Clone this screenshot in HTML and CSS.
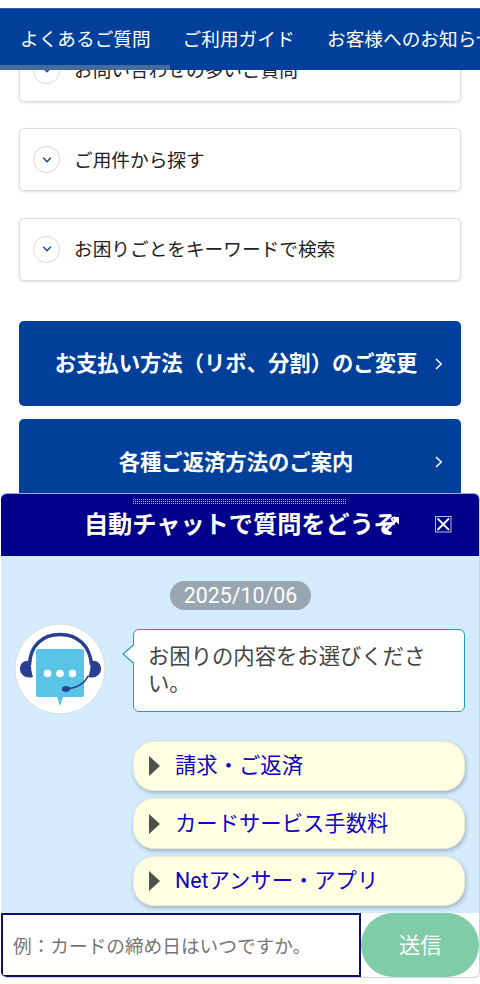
FILE: index.html
```
<!DOCTYPE html>
<html lang="ja">
<head>
<meta charset="utf-8">
<meta name="viewport" content="width=device-width">
<title>よくあるご質問</title>
<link rel="stylesheet" href="styles.css">
</head>
<body>
<nav class="nav">
  <a class="nav-item active">よくあるご質問</a>
  <a class="nav-item">ご利用ガイド</a>
  <a class="nav-item">お客様へのお知らせ</a>
</nav>
<main class="content">
  <div class="card"><span class="circle"><svg width="10" height="6" viewBox="0 0 10 6"><path d="M1.2 .8 5 4.8 8.8 .8"/></svg></span><span class="label">お問い合わせの多いご質問</span></div>
  <div class="card"><span class="circle"><svg width="10" height="6" viewBox="0 0 10 6"><path d="M1.2 .8 5 4.8 8.8 .8"/></svg></span><span class="label">ご用件から探す</span></div>
  <div class="card"><span class="circle"><svg width="10" height="6" viewBox="0 0 10 6"><path d="M1.2 .8 5 4.8 8.8 .8"/></svg></span><span class="label">お困りごとをキーワードで検索</span></div>
  <div class="links">
    <a class="link">お支払い方法（リボ、分割）のご変更<svg class="arrow" width="8" height="12" viewBox="0 0 8 12"><path d="M1 1 6.2 6 1 11"/></svg></a>
    <a class="link">各種ご返済方法のご案内<svg class="arrow" width="8" height="12" viewBox="0 0 8 12"><path d="M1 1 6.2 6 1 11"/></svg></a>
  </div>
</main>
<section class="chat">
  <header class="chat-head">
    <svg class="grip" width="214" height="5" viewBox="0 0 214 5"><path d="M0 .5H214M0 2.5H214M0 4.5H214"/></svg>
    <h2 class="title">自動チャットで質問をどうぞ</h2>
    <svg class="expand" width="18" height="18" viewBox="0 0 18 18"><path class="stroke" d="M4 14 14 4"/><path class="fill" d="M9.500 1H17V8.500zM1.500 9.500V17H9z"/></svg>
    <svg class="close" width="17" height="17" viewBox="0 0 17 17"><rect x=".5" y=".5" width="15.5" height="15.5"/><path d="M2.500 2.500 14 14M14 2.500 2.500 14"/></svg>
  </header>
  <div class="log">
    <div class="date">2025/10/06</div>
    <div class="row">
      <svg class="avatar" width="92" height="92" viewBox="0 0 92 92">
        <circle cx="46" cy="46" r="45" fill="#fff" stroke="#d9dde1"/>
        <path d="M22 26H68Q70 26 70 28V72Q70 74 68 74H49L46 83 43 74H24Q22 74 22 72V28Q22 26 24 26Z" fill="#59c4e7"/>
        <path d="M15.500 42C16 22 29 11.500 46 11.500S76 22 77.500 42" fill="none" stroke="#27408f" stroke-width="3.500"/>
        <path d="M19 54C12 56 6 52 6 46C6 40 10 37 16.500 38Q17 48 19 54ZM74 54C81 56 87 52 87 46C87 40 83 37 76.500 38Q77 48 74 54Z" fill="#27408f"/>
        <path d="M74 53C70 62 62 65 52 66" fill="none" stroke="#27408f" stroke-width="1.700"/>
        <rect x="48" y="63.300" width="8" height="5.400" rx="2.700" fill="#27408f"/>
        <circle cx="33.500" cy="50.500" r="3.800" fill="#fff"/><circle cx="46" cy="50.500" r="3.800" fill="#fff"/><circle cx="58.500" cy="50.500" r="3.800" fill="#fff"/>
      </svg>
      <div class="bubble">お困りの内容をお選びください。<svg class="tail" width="13" height="20" viewBox="0 0 13 20"><path d="M13 .7H11.700L1 10 11.700 19.300H13" fill="#fff" stroke="none"/><path d="M11.700 .7 1 10 11.700 19.300" fill="none" stroke="#2598bf" stroke-width="1.200"/></svg></div>
    </div>
    <div class="choices">
      <button class="choice"><svg width="11" height="20" viewBox="0 0 11 20"><path d="M0 0 11 10 0 20z"/></svg>請求・ご返済</button>
      <button class="choice"><svg width="11" height="20" viewBox="0 0 11 20"><path d="M0 0 11 10 0 20z"/></svg>カードサービス手数料</button>
      <button class="choice"><svg width="11" height="20" viewBox="0 0 11 20"><path d="M0 0 11 10 0 20z"/></svg>Netアンサー・アプリ</button>
    </div>
  </div>
  <form class="compose">
    <input class="field" type="text" placeholder="例：カードの締め日はいつですか。">
    <button class="send" type="button">送信</button>
  </form>
</section>
</body>
</html>
```

FILE: styles.css
```
* { box-sizing: border-box; }
body {
  margin: 0;
  height: 984px;
  overflow: hidden;
  background: #fff;
  color: #222;
  font-family: Roboto, "Noto Sans CJK JP", sans-serif;
  font-size: 18.660px;
}
button, input { font-family: inherit; }
.nav {
  position: relative;
  z-index: 1;
  margin-top: 8px;
  height: 62px;
  display: flex;
  background: #00409a;
  border-top: 1px solid #315f9f;
  color: #fff;
  overflow: hidden;
}
.nav-item {
  flex: none;
  padding: 3px 13px 0 20px;
  line-height: 57px;
  white-space: nowrap;
}
.nav-item.active { padding-right: 19px; border-bottom: 5px solid #476b9b; line-height: 56px; }
.nav-item.active + .nav-item { padding-left: 13px; }
.nav-item:last-child { padding-left: 19.500px; }
.nav-item:not(.active) { line-height: 56px; }
.content { padding: 0 19px; margin-top: -31.500px; }
.card {
  display: flex;
  align-items: center;
  gap: 14px;
  height: 63px;
  margin-bottom: 26.600px;
  padding: 0 13px;
  background: #fff;
  border: 1.500px solid #dcdddf;
  border-radius: 5px;
  box-shadow: 0 1px 3px rgba(0, 0, 0, .13);
}
.label { padding-bottom: 3px; }
.circle {
  display: flex;
  align-items: center;
  justify-content: center;
  width: 27px;
  height: 27px;
  border: 1px solid #d5d7de;
  border-radius: 50%;
}
.circle path { fill: none; stroke: #15458f; stroke-width: 1.400; }
.links { display: grid; gap: 13px; margin-top: 40px; }
.link {
  position: relative;
  height: 85.600px;
  display: flex;
  align-items: center;
  justify-content: center;
  padding: 0 8px 4px 0;
  border-radius: 5px;
  background: #00409a;
  color: #fff;
  font-size: 21.330px;
  font-weight: 700;
  white-space: nowrap;
}
.arrow { position: absolute; right: 18px; top: 37px; }
.arrow path { fill: none; stroke: #fff; stroke-width: 1.500; }
.chat {
  position: absolute;
  z-index: 2;
  left: 1px;
  top: 493px;
  width: 479px;
  height: 485px;
  display: flex;
  flex-direction: column;
  overflow: hidden;
  border: 1px solid #d0d5df;
  border-left: 0;
  border-top-color: #9caee0;
  border-radius: 6px;
  background: #fff;
}
.chat-head {
  position: relative;
  flex: none;
  height: 62px;
  display: flex;
  align-items: center;
  justify-content: center;
  background: #00008b;
  color: #fff;
}
.grip { position: absolute; left: 132px; top: 5px; }
.grip path { stroke: #b9b9e2; stroke-width: 1; stroke-dasharray: 1 1; }
.title { margin: 0; padding-left: 2px; font-size: 24.200px; line-height: 62px; font-weight: 700; }
.expand { position: absolute; left: 381px; top: 22px; }
.expand .stroke { stroke: #fff; stroke-width: 3; }
.expand .fill { fill: #fff; }
.close { position: absolute; left: 434px; top: 22px; }
.close rect { fill: none; stroke: #bcbce2; stroke-width: 1; }
.close path { stroke: #fff; stroke-width: 1.800; }
.log { height: 357px; flex: none; padding: 25px 13px 0 14px; background: #d5ecfd; overflow: hidden; }
.date {
  width: 141px;
  height: 29px;
  margin: 0 auto;
  border-radius: 15px;
  background: #97a6b1;
  color: #fff;
  font-size: 21.330px;
  line-height: 29px;
  text-align: center;
}
.row { display: flex; align-items: flex-start; margin-top: 13px; }
.avatar { flex: none; margin-right: 27px; margin-left: -1px; }
.bubble {
  position: relative;
  width: 332px;
  height: 83px;
  margin-top: 6px;
  padding: 13px 14px;
  border: 1.500px solid #2598bf;
  border-radius: 6px;
  background: #fff;
  color: #444;
  font-size: 21.330px;
  line-height: 27px;
}
.tail { position: absolute; left: -12px; top: 14px; }
.choices { display: grid; gap: 7px; margin: 26px 0 0 118px; }
.choice {
  display: flex;
  align-items: center;
  gap: 15px;
  width: 332px;
  height: 50.400px;
  padding: 0 15px;
  border: 1px solid #e9edda;
  border-radius: 21px;
  background: #ffffe2;
  box-shadow: 1px 2px 4px rgba(0, 0, 0, .25);
  color: #1000c9;
  font-size: 21.330px;
  line-height: 30px;
  white-space: nowrap;
}
.choice path { fill: #4c5150; }
.compose { display: flex; flex: none; height: 64px; margin: 0; }
.field {
  width: 361px;
  height: 64px;
  padding: 3px 10px 0;
  border: 2px solid #10106b;
  border-radius: 0;
  background: #fff;
  font-size: 18.660px;
}
.field::placeholder { color: #757575; }
.send {
  width: 118px;
  height: 64px;
  padding: 0 0 4px;
  border: 0;
  border-radius: 32px;
  background: #80cca6;
  color: #fff;
  font-size: 21.330px;
}
```
